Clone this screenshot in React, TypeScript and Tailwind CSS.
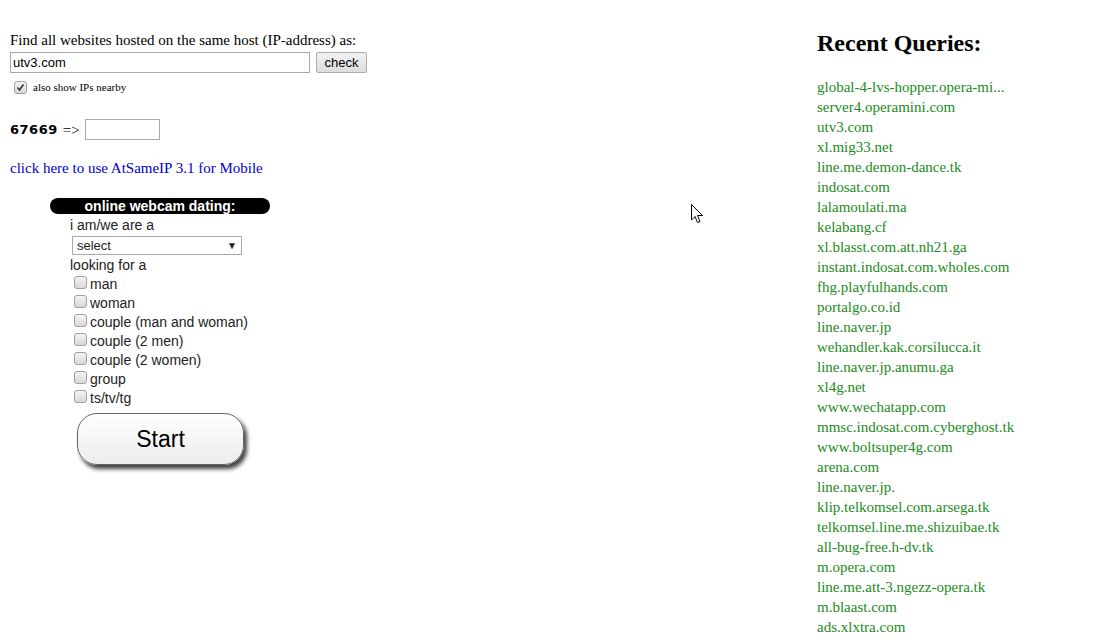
import React from 'react';

const queries = [
  'global-4-lvs-hopper.opera-mi...',
  'server4.operamini.com',
  'utv3.com',
  'xl.mig33.net',
  'line.me.demon-dance.tk',
  'indosat.com',
  'lalamoulati.ma',
  'kelabang.cf',
  'xl.blasst.com.att.nh21.ga',
  'instant.indosat.com.wholes.com',
  'fhg.playfulhands.com',
  'portalgo.co.id',
  'line.naver.jp',
  'wehandler.kak.corsilucca.it',
  'line.naver.jp.anumu.ga',
  'xl4g.net',
  'www.wechatapp.com',
  'mmsc.indosat.com.cyberghost.tk',
  'www.boltsuper4g.com',
  'arena.com',
  'line.naver.jp.',
  'klip.telkomsel.com.arsega.tk',
  'telkomsel.line.me.shizuibae.tk',
  'all-bug-free.h-dv.tk',
  'm.opera.com',
  'line.me.att-3.ngezz-opera.tk',
  'm.blaast.com',
  'ads.xlxtra.com',
  'line.me.whatsapp.indosat.tk',
];

const lookingFor = [
  'man',
  'woman',
  'couple (man and woman)',
  'couple (2 men)',
  'couple (2 women)',
  'group',
  'ts/tv/tg',
];

function Box({ checked }: { checked?: boolean }) {
  return (
    <span className="inline-flex h-[13px] w-[13px] shrink-0 items-center justify-center rounded-[3px] border border-[#a0a0a0] bg-gradient-to-b from-[#f4f4f4] to-[#d8d8d8]">
      {checked && (
        <svg width="9" height="9" viewBox="0 0 9 9">
          <path d="M1.5 4.5 L3.5 7 L7.5 1.5" stroke="#333" strokeWidth="1.6" fill="none" />
        </svg>
      )}
    </span>
  );
}

function DatingBox() {
  return (
    <div className="ml-[40px] mt-[21px] w-[220px] font-['Liberation_Sans',Arial,sans-serif] text-[14px] text-[#222]">
      <div className="flex h-[16px] items-center justify-center rounded-full bg-black text-[14px] font-bold leading-none text-white">
        online webcam dating:
      </div>
      <div className="ml-[20px] mt-[2px] leading-[18px]">i am/we are a</div>
      <div className="ml-[22px] mt-[2px] flex h-[19px] w-[170px] items-center justify-between border border-[#a9a9a9] bg-white px-[4px] text-[13px] leading-none">
        <span>select</span>
        <span className="text-[10px]">▼</span>
      </div>
      <div className="ml-[20px] mt-[1px] leading-[18px]">looking for a</div>
      <div className="ml-[24px]">
        {lookingFor.map((l) => (
          <div key={l} className="flex h-[19px] items-start gap-[3px] leading-[19px]">
            <span className="mt-[1px]">
              <Box />
            </span>
            <span className="mt-[1px]">{l}</span>
          </div>
        ))}
      </div>
      <button className="ml-[27px] mt-[6px] h-[52px] w-[167px] rounded-[20px] border border-[#666] bg-gradient-to-b from-white to-[#ececec] text-[23px] leading-none text-black shadow-[3px_4px_4px_rgba(0,0,0,0.75)]">
        Start
      </button>
    </div>
  );
}

export default function App() {
  return (
    <div className="relative h-[642px] w-[1110px] overflow-hidden bg-white font-['Liberation_Serif','Times_New_Roman',serif] text-black">
      <div className="flex">
        {/* left column */}
        <div className="w-[817px] shrink-0 pl-[10px] pt-[31px]">
          <div className="text-[15px] leading-[18px]">Find all websites hosted on the same host (IP-address) as:</div>
          <div className="mt-[3px] flex items-center gap-[6px]">
            <div className="flex h-[21px] w-[300px] items-center border border-[#a9a9a9] px-[2px] font-['Liberation_Sans',Arial,sans-serif] text-[13px]">
              utv3.com
            </div>
            <button className="h-[21px] w-[51px] rounded-[2px] border border-[#acacac] bg-gradient-to-b from-[#f2f2f2] to-[#dddddd] font-['Liberation_Sans',Arial,sans-serif] text-[13px] leading-none text-black">
              check
            </button>
          </div>
          <div className="mt-[6px] flex items-center gap-[6px] pl-[4px]">
            <Box checked />
            <span className="text-[11px]">also show IPs nearby</span>
          </div>
          <div className="mt-[23px] flex items-center gap-[5px] text-[15px]">
            <span className="font-['DejaVu_Sans',Verdana,sans-serif] text-[13px] font-bold tracking-[0.5px]">67669</span>
            <span>=&gt;</span>
            <div className="h-[21px] w-[75px] border border-[#a9a9a9]" />
          </div>
          <div className="mt-[18px] text-[15px] leading-[18px] text-[#0000cc]">
            click here to use AtSameIP 3.1 for Mobile
          </div>
          <DatingBox />
        </div>

        {/* right column */}
        <div className="pt-[28px]">
          <h2 className="text-[24px] font-bold leading-[30px]">Recent Queries:</h2>
          <div className="mt-[19px] text-[15px] leading-[20px] text-[#228b22]">
            {queries.map((q, i) => (
              <div key={i} className="whitespace-nowrap">{q}</div>
            ))}
          </div>
        </div>
      </div>

      {/* mouse pointer */}
      <svg className="absolute left-[691px] top-[204px]" width="13" height="20" viewBox="0 0 13 20">
        <path d="M0.5 0.5 L0.5 16 L4 12.5 L6.5 18.5 L9 17.5 L6.5 11.5 L11.5 11.5 Z" fill="white" stroke="black" strokeWidth="1" />
      </svg>
    </div>
  );
}
